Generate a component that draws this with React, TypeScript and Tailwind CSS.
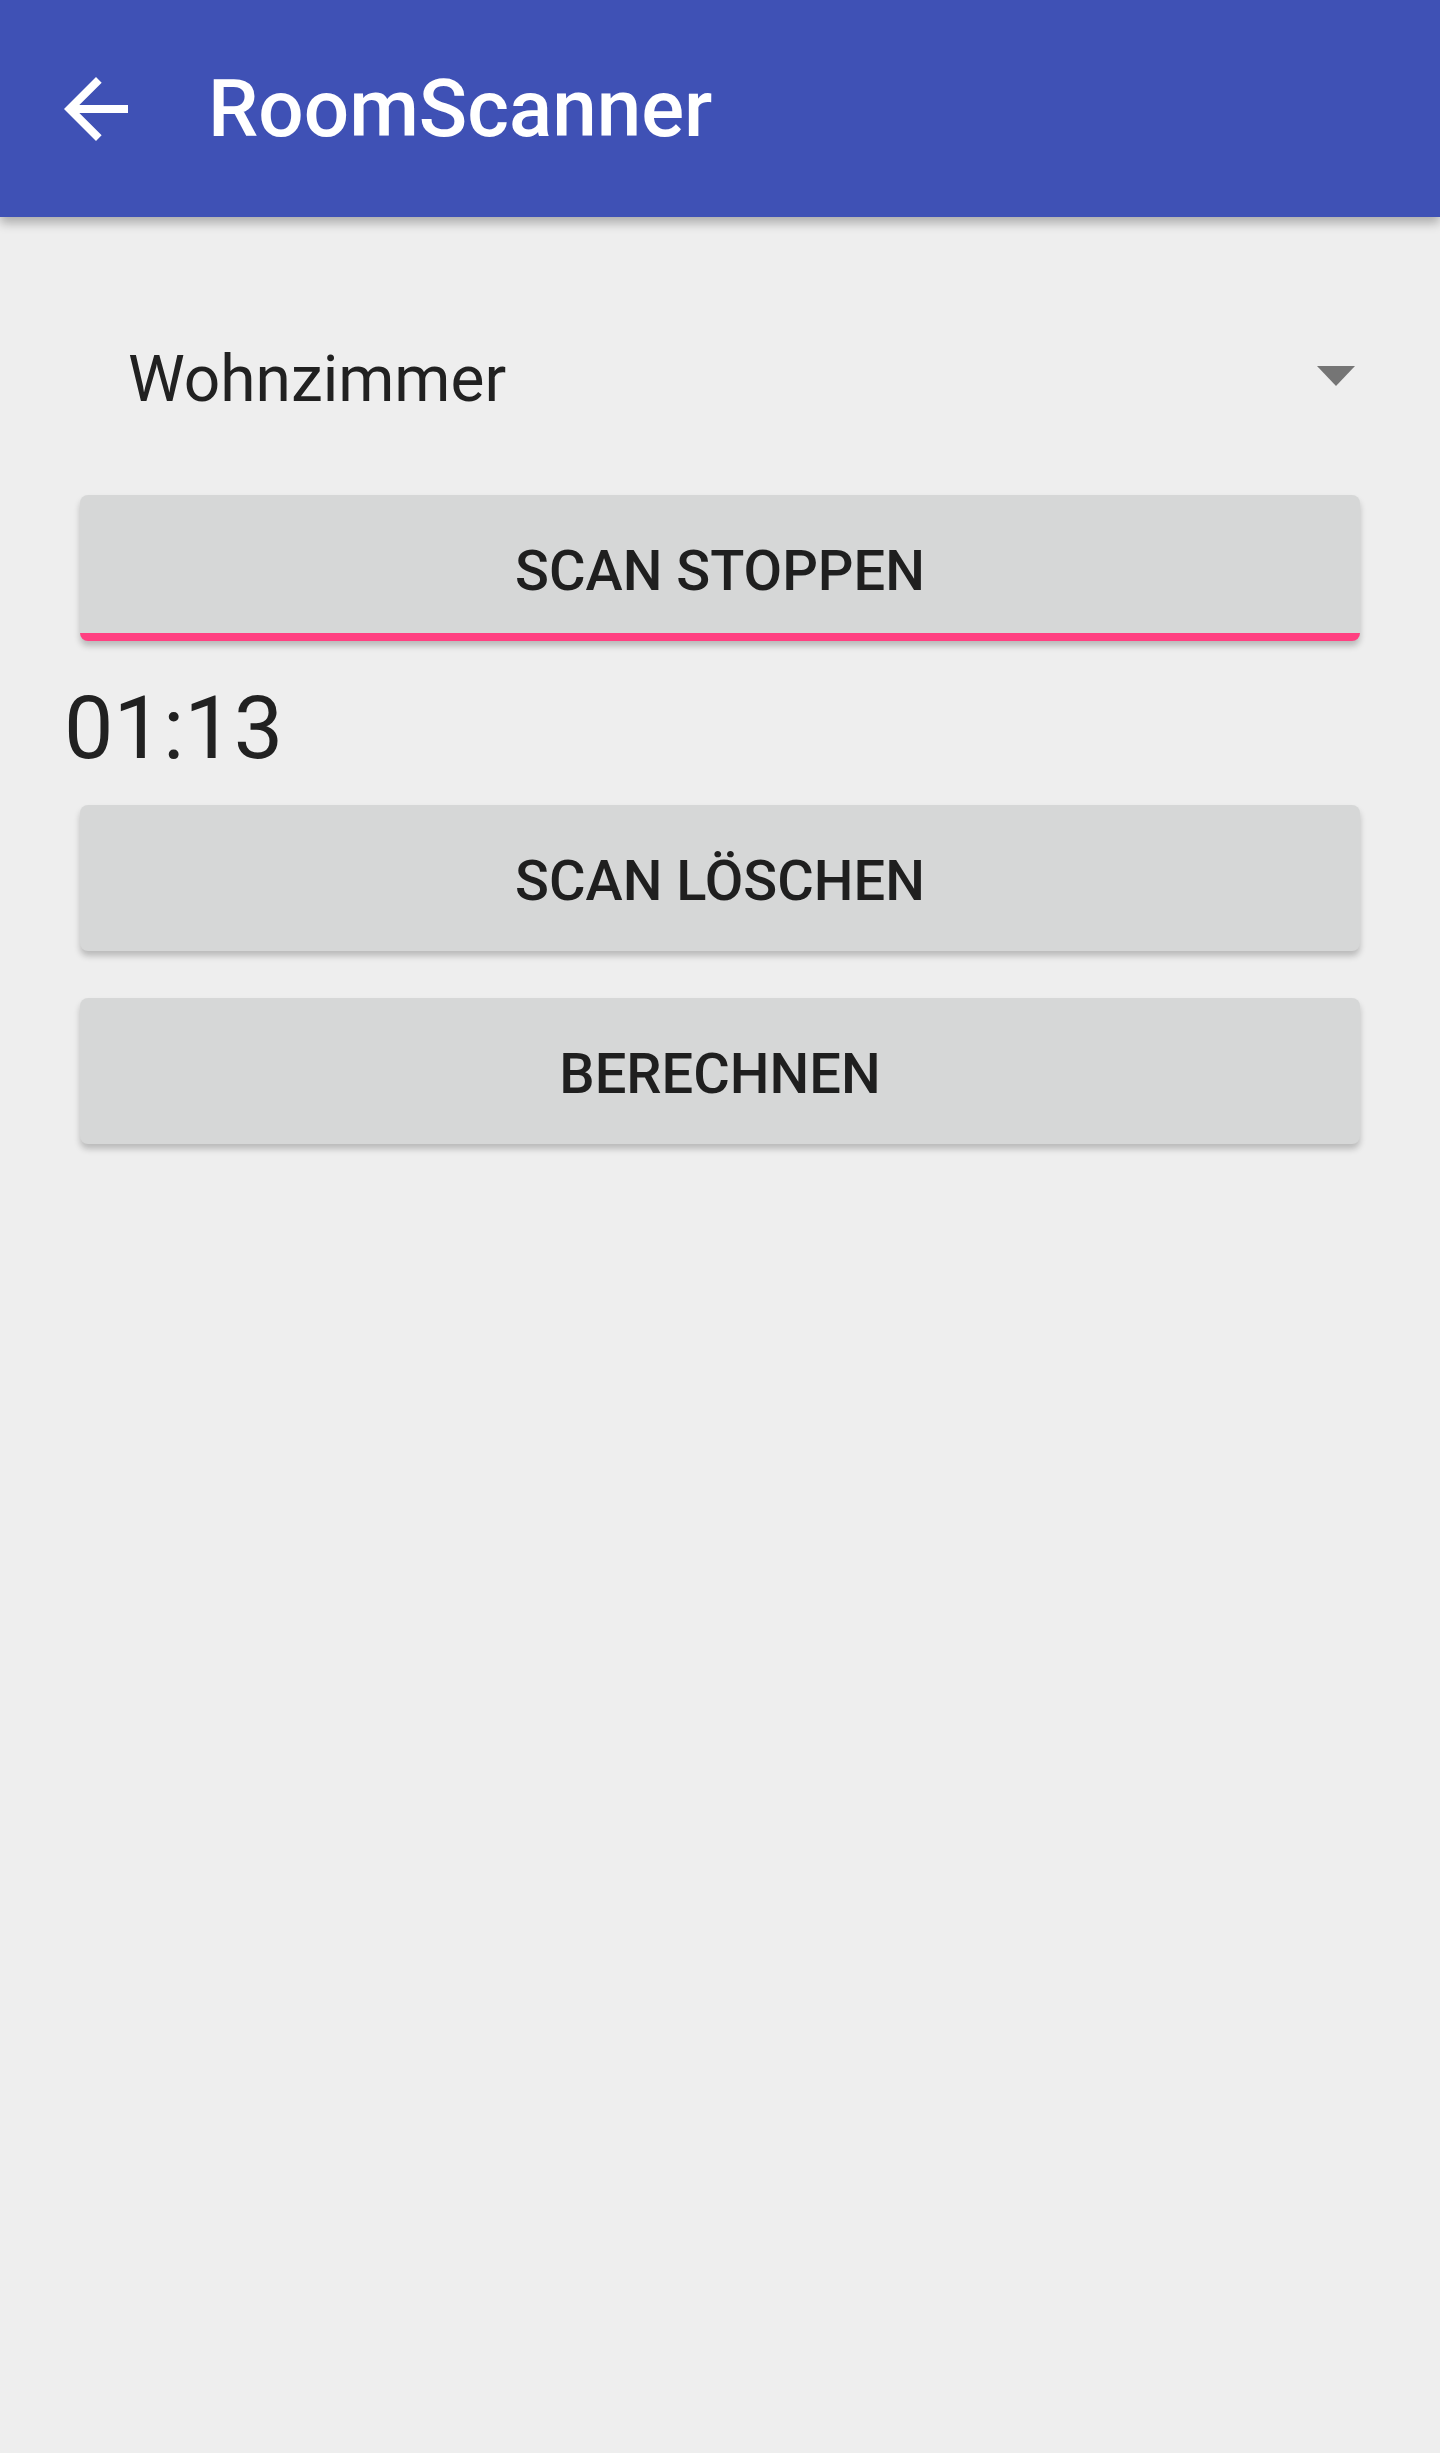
const ROBOTO = { fontFamily: "Roboto, 'Noto Sans', sans-serif" };

function ArrowBack() {
  return (
    <svg width="96" height="96" viewBox="0 0 24 24" fill="white">
      <path d="M20 11H7.83l5.59-5.59L12 4l-8 8 8 8 1.41-1.41L7.83 13H20v-2z" />
    </svg>
  );
}

function RaisedButton({
  label,
  active,
}: {
  label: string;
  active?: boolean;
}) {
  return (
    <button
      className={
        active
          ? "flex h-[146px] w-full items-center justify-center rounded-[8px] border-b-[8px] border-[#FF4081] bg-[#D6D7D7] pt-[14px] shadow-[0_5px_6px_rgba(0,0,0,0.22)]"
          : "flex h-[146px] w-full items-center justify-center rounded-[8px] bg-[#D6D7D7] pt-[6px] shadow-[0_5px_6px_rgba(0,0,0,0.22)]"
      }
    >
      <span className="text-[56px] font-medium leading-none text-[#1F1F1F]">
        {label}
      </span>
    </button>
  );
}

export default function App() {
  return (
    <div className="min-h-[2453px] w-full bg-[#EEEEEE]" style={ROBOTO}>
      {/* toolbar */}
      <header className="relative z-10 flex h-[217px] items-center bg-[#3F51B5] shadow-[0_6px_10px_rgba(0,0,0,0.28)]">
        <div className="ml-[48px] flex h-[96px] w-[96px] items-center justify-center">
          <ArrowBack />
        </div>
        <h1 className="ml-[64px] text-[80px] font-medium leading-none text-white">
          RoomScanner
        </h1>
      </header>

      <main className="flex flex-col px-[80px]">
        {/* room spinner */}
        <div className="mt-[131px] flex h-[64px] items-center justify-between pl-[48px] pr-[5px]">
          <span className="text-[64px] leading-none text-[#212121]">
            Wohnzimmer
          </span>
          <svg width="38" height="20" viewBox="0 0 38 20" className="-mt-[8px]">
            <polygon points="0,0 38,0 19,20" fill="#757575" />
          </svg>
        </div>

        <div className="mt-[83px]">
          <RaisedButton label="SCAN STOPPEN" active />
        </div>

        <div className="-ml-[16px] mt-[43px] h-[90px] text-[88px] leading-none text-[#212121]">
          01:13
        </div>

        <div className="mt-[31px]">
          <RaisedButton label="SCAN LÖSCHEN" />
        </div>

        <div className="mt-[47px]">
          <RaisedButton label="BERECHNEN" />
        </div>
      </main>
    </div>
  );
}
